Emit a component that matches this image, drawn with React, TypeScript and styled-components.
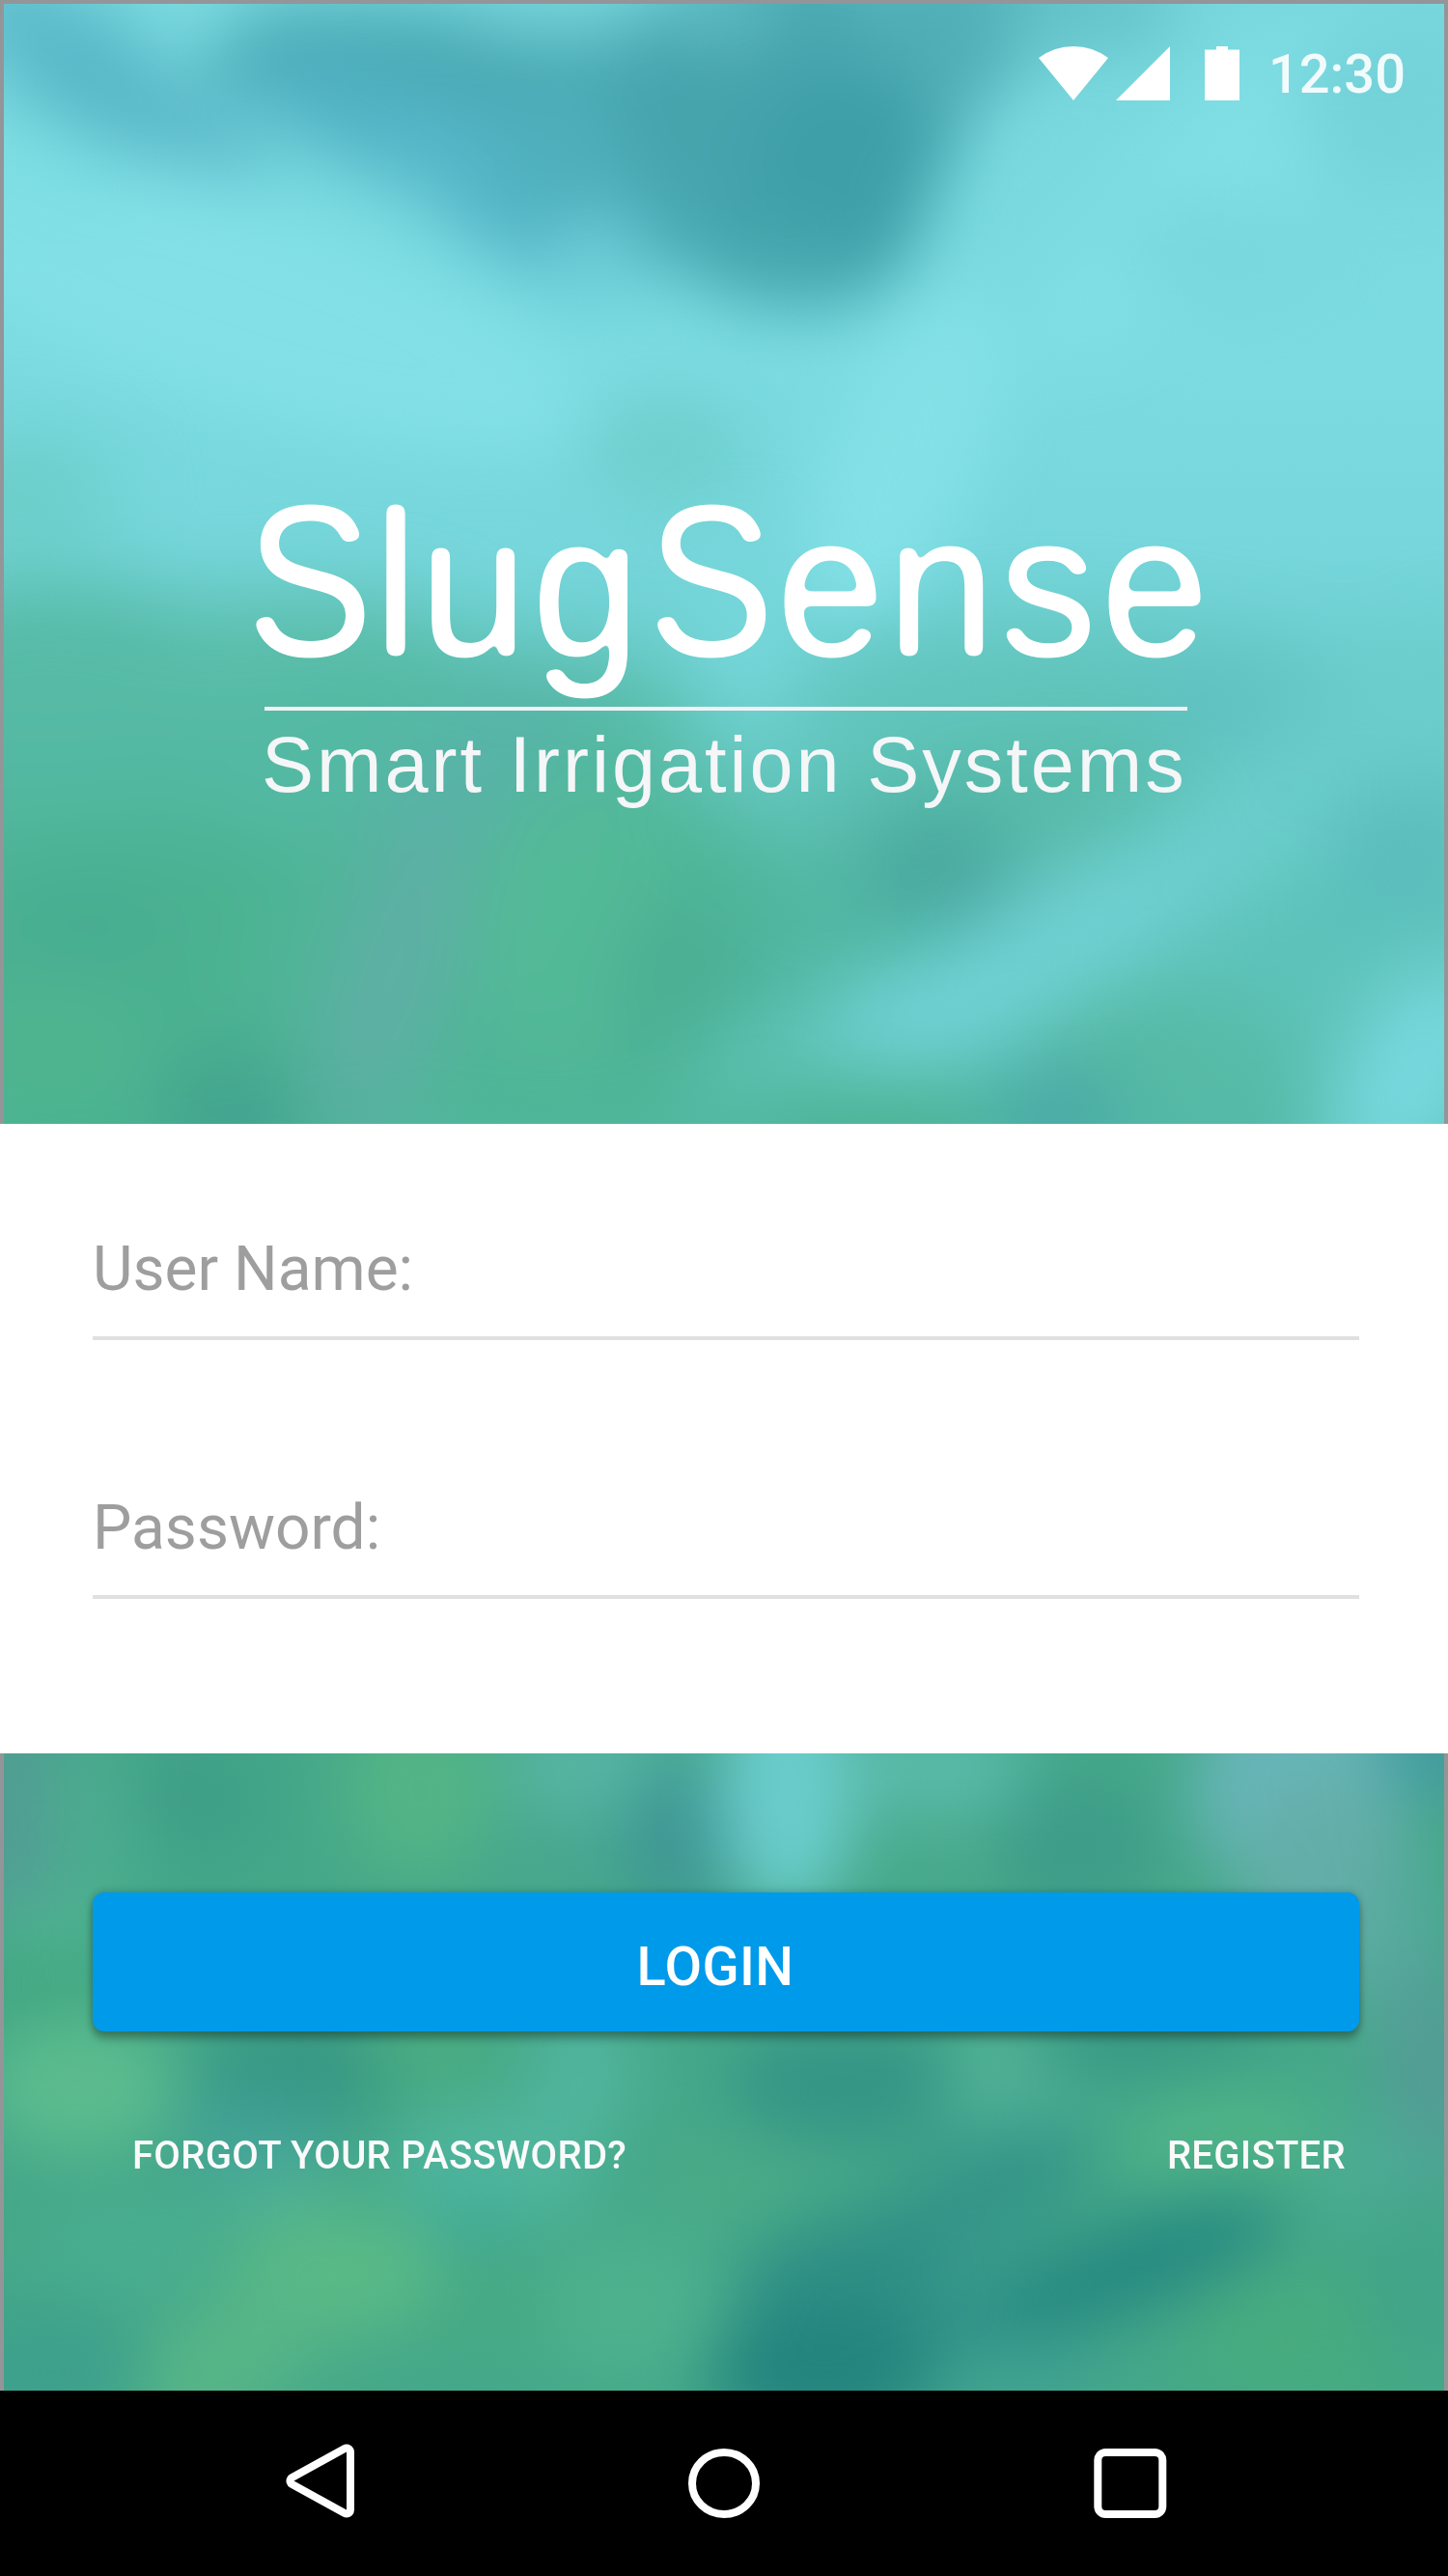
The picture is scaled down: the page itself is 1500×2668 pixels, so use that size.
import React from "react";
import styled, { createGlobalStyle } from "styled-components";

const GlobalStyle = createGlobalStyle`
  *, *::before, *::after { box-sizing: border-box; }
  body { margin: 0; background: #000; }
  h1, p { margin: 0; font-weight: 400; }
`;

/* Blurred garden photograph: soft blobs of colour on an 882 x 1568 canvas. */
type Blob = [cx: number, cy: number, rx: number, ry: number, color: string, rotate?: number];

const skyBlobs: Blob[] = [
  [130, 180, 240, 60, "#82e0e6", 18],
  [50, 40, 90, 34, "#58b7c6", 35],
  [110, 75, 60, 20, "#5cbac9", 25],
  [20, 110, 60, 26, "#7edee4", 20],
  [310, 56, 200, 44, "#4aa9b3", 8],
  [250, 82, 110, 30, "#51b2c4", 20],
  [300, 120, 90, 28, "#55b6c8", 35],
  [370, 110, 70, 50, "#4fb0bc", 30],
  [480, 60, 110, 90, "#46a4ad"],
  [570, 20, 80, 50, "#50aeb6", -30],
  [510, 110, 58, 78, "#3f9fa8", 14],
  [470, 160, 60, 26, "#47a7af", 10],
  [360, 150, 26, 18, "#74d2dc"],
  [660, 6, 60, 24, "#62c0c6"],
  [116, 8, 32, 22, "#7ddce2"],
  [335, 4, 56, 18, "#76d4da"],
  [440, 8, 40, 18, "#5fbcc3"],
  [10, 16, 34, 18, "#5ebccc"],
  [740, 110, 150, 44, "#80dfe5", -45],
  [550, 280, 46, 110, "#83e1e6", 25],
  [405, 275, 50, 34, "#6fcfcd"],
  [740, 150, 60, 30, "#78d7dd"],
  [850, 60, 60, 50, "#74d2d9"],
];

const leafBlobs: Blob[] = [
  [10, 300, 60, 32, "#6acdc6"],
  [130, 490, 230, 120, "#51b79e"],
  [30, 410, 120, 56, "#56baa6"],
  [190, 400, 90, 36, "#5abda9"],
  [280, 460, 160, 64, "#54b9a3"],
  [90, 620, 210, 110, "#4ab190"],
  [330, 590, 180, 120, "#4fb597"],
  [480, 600, 110, 60, "#50b6a0"],
  [350, 560, 60, 80, "#53ba97"],
  [290, 470, 75, 34, "#57b3a8", -40],
  [240, 590, 34, 110, "#5fafa6", 18],
  [140, 680, 36, 34, "#3f9f8e"],
  [50, 565, 56, 28, "#48ad91"],
  [30, 640, 60, 40, "#4fb590"],
  [415, 600, 40, 56, "#4aae92"],
  [650, 440, 170, 56, "#60c4bb"],
  [750, 425, 60, 30, "#60c1c1"],
  [600, 495, 120, 34, "#56b9a6", -12],
  [572, 530, 46, 32, "#46a59d"],
  [455, 395, 28, 66, "#77d8dc"],
  [440, 460, 40, 20, "#63c5bb"],
  [810, 470, 140, 38, "#6bcecc", -34],
  [620, 590, 150, 34, "#72d2d6", -30],
  [560, 612, 70, 28, "#72d3d8", -15],
  [465, 640, 50, 20, "#62c6bb", -20],
  [780, 585, 110, 46, "#5dc2b9", -34],
  [850, 520, 44, 44, "#5abdbd"],
  [700, 640, 80, 30, "#55b9a2"],
  [530, 682, 70, 28, "#4ab08f"],
  [645, 680, 36, 28, "#45a4a6"],
  [862, 655, 44, 80, "#78d9df", 30],
];

const groveBlobs: Blob[] = [
  [8, 1110, 34, 70, "#529c95"],
  [60, 1110, 34, 50, "#4cad8f"],
  [120, 1095, 44, 40, "#3e9f87"],
  [255, 1090, 46, 56, "#53b486"],
  [360, 1075, 56, 34, "#56b5a3"],
  [340, 1135, 50, 24, "#47a78f"],
  [412, 1120, 34, 48, "#3f9794"],
  [480, 1090, 42, 76, "#6bcdcc"],
  [570, 1076, 60, 30, "#5abbaa"],
  [580, 1130, 60, 24, "#49aa8c"],
  [655, 1125, 48, 42, "#3d9c89"],
  [790, 1090, 64, 66, "#68b6b9"],
  [810, 1140, 54, 60, "#64aea9"],
  [876, 1068, 36, 24, "#4299a3"],
  [850, 1190, 26, 60, "#58a99f"],
  [30, 1180, 36, 26, "#50b492"],
  [26, 1215, 40, 30, "#41a681"],
  [48, 1270, 58, 42, "#5cbc8f"],
  [185, 1260, 66, 32, "#379783"],
  [155, 1300, 44, 26, "#40a098"],
  [265, 1250, 44, 26, "#49ac81"],
  [355, 1260, 32, 44, "#51b59f"],
  [300, 1320, 64, 38, "#50b69d"],
  [165, 1330, 44, 20, "#4dae97"],
  [285, 1352, 34, 20, "#42ab99"],
  [515, 1270, 72, 34, "#349486"],
  [620, 1270, 44, 46, "#51b296"],
  [700, 1245, 76, 24, "#389885"],
  [745, 1305, 60, 42, "#4fb388"],
  [870, 1270, 26, 74, "#559b96"],
  [840, 1325, 34, 34, "#4cac96"],
  [618, 1330, 52, 24, "#2f9186", -40],
  [450, 1330, 60, 30, "#49aa87"],
  [80, 1370, 60, 30, "#49ae90"],
  [205, 1385, 66, 40, "#59b986"],
  [135, 1440, 66, 34, "#58b687", -30],
  [30, 1445, 60, 40, "#3da08c"],
  [380, 1405, 64, 44, "#4db18e"],
  [300, 1400, 36, 36, "#46a985"],
  [570, 1360, 90, 34, "#349588", -45],
  [530, 1400, 80, 52, "#2e8f85"],
  [500, 1445, 70, 40, "#23847e"],
  [690, 1380, 100, 28, "#268981", -22],
  [600, 1380, 40, 20, "#3a9c8c", -40],
  [620, 1450, 54, 24, "#40a292"],
  [800, 1425, 80, 42, "#47ab7f"],
  [860, 1390, 34, 56, "#42a488"],
];

function Blobs({ items }: { items: Blob[] }) {
  return (
    <>
      {items.map(([cx, cy, rx, ry, color, rotate = 0], i) => (
        <ellipse
          key={i}
          cx={cx}
          cy={cy}
          rx={rx}
          ry={ry}
          fill={color}
          transform={`rotate(${rotate} ${cx} ${cy})`}
        />
      ))}
    </>
  );
}

const Photo = styled.svg`
  position: absolute;
  inset: 0;
  width: 100%;
  height: 100%;
`;

function Backdrop({ viewBox, children }: { viewBox: string; children: React.ReactNode }) {
  return (
    <Photo viewBox={viewBox} preserveAspectRatio="none" aria-hidden="true">
      {children}
    </Photo>
  );
}

const Screen = styled.main`
  width: 1500px;
  height: 2668px;
  display: flex;
  flex-direction: column;
  font-family: Roboto, "Liberation Sans", sans-serif;
  overflow: hidden;
`;

const Hero = styled.header`
  position: relative;
  height: 1164px;
  border: 4px solid #949599;
  border-bottom: 0;
  overflow: hidden;
  color: #fff;
`;

const StatusBar = styled.div`
  position: relative;
  height: 100px;
  padding: 44px 40px 0 0;
  display: flex;
  justify-content: flex-end;
  align-items: flex-start;
`;

const StatusIcon = styled.svg<{ $w: number; $gap: number }>`
  width: ${(p) => p.$w}px;
  height: 56px;
  margin-right: ${(p) => p.$gap}px;
  fill: #fff;
`;

const Clock = styled.span`
  font-size: 56px;
  line-height: 58px;
  font-weight: 500;
  color: rgba(255, 255, 255, 0.9);
`;

const Brand = styled.div`
  position: relative;
  width: 956px;
  margin: 392px 0 0 270px;
  font-family: "Liberation Sans", Arial, sans-serif;
`;

const Wordmark = styled.h1`
  margin-left: -19px;
  height: 236px;
  font-size: 210px;
  line-height: 221px;
  letter-spacing: 5px;
  white-space: nowrap;
  transform: scaleX(0.956);
  transform-origin: left top;
  filter: url(#rounded-terminals);
`;

const Letter = styled.span<{ $size: number; $spacing: number }>`
  font-size: ${(p) => p.$size}px;
  line-height: 0;
  letter-spacing: ${(p) => p.$spacing}px;
`;

const Capital = styled(Letter)`
  display: inline-block;
  transform: scaleX(0.925);
  transform-origin: left center;
`;

const Tagline = styled.p`
  border-top: 4px solid #f1f2f5;
  padding-top: 8px;
  font-size: 81px;
  line-height: 96px;
  letter-spacing: 3px;
  text-indent: -3px;
  white-space: nowrap;
  color: #f5f6f8;
`;

const Sheet = styled.section`
  height: 652px;
  padding: 110px 92px 0 96px;
  display: flex;
  flex-direction: column;
  gap: 154px;
  background: #fff;
`;

const Field = styled.label`
  display: block;
  height: 114px;
  border-bottom: 4px solid #e0e0e0;
  font-size: 64px;
  line-height: 82px;
  color: #9e9e9e;
`;

const Actions = styled.section`
  position: relative;
  height: 660px;
  border: solid #949599;
  border-width: 0 4px;
  padding: 144px 88px 0 92px;
  overflow: hidden;
`;

const LoginButton = styled.button`
  position: relative;
  display: flex;
  align-items: center;
  justify-content: center;
  width: 1312px;
  height: 144px;
  padding: 10px 22px 0 0;
  border: 0;
  border-radius: 12px;
  background: #009aea;
  box-shadow: 0 0 8px rgba(0, 0, 0, 0.24), 0 8px 8px rgba(0, 0, 0, 0.26);
  font: 500 56px/56px Roboto, sans-serif;
  letter-spacing: 0.4px;
  color: #fff;
`;

const Links = styled.div`
  position: relative;
  display: flex;
  justify-content: space-between;
  margin-top: 105px;
  padding: 0 14px 0 41px;
`;

const TextLink = styled.a`
  font-size: 40px;
  line-height: 48px;
  font-weight: 500;
  letter-spacing: 0.3px;
  color: #fafafa;
`;

const NavBar = styled.nav`
  height: 192px;
  padding: 54px 291px 0 295px;
  display: flex;
  justify-content: space-between;
  align-items: flex-start;
  background: #000;
`;

const NavIcon = styled.svg<{ $w: number; $stroke?: number }>`
  width: ${(p) => p.$w}px;
  height: 80px;
  fill: #000;
  stroke: #fff;
  stroke-width: ${(p) => p.$stroke ?? 8};
  stroke-linejoin: round;
  paint-order: ${(p) => (p.$stroke ? "stroke" : "normal")};
`;

export default function App() {
  return (
    <Screen>
      <GlobalStyle />
      <Hero>
        <Backdrop viewBox="2 2 878 682">
          <defs>
            <linearGradient id="sky" x1="0" y1="0" x2="0" y2="1">
              <stop offset="0" stopColor="#78d8de" />
              <stop offset="0.32" stopColor="#7bdbe1" />
              <stop offset="0.48" stopColor="#76d6db" />
              <stop offset="0.7" stopColor="#64c6c0" />
              <stop offset="1" stopColor="#54b9a6" />
            </linearGradient>
            <filter id="haze" x="-20%" y="-20%" width="140%" height="140%" colorInterpolationFilters="sRGB">
              <feGaussianBlur stdDeviation="20" />
            </filter>
            <filter id="deep-haze" x="-20%" y="-20%" width="140%" height="140%" colorInterpolationFilters="sRGB">
              <feGaussianBlur stdDeviation="25" />
            </filter>
            <filter id="rounded-terminals" colorInterpolationFilters="sRGB">
              <feGaussianBlur stdDeviation="4.5" />
              <feComponentTransfer>
                <feFuncR type="linear" slope="0" intercept="1" />
                <feFuncG type="linear" slope="0" intercept="1" />
                <feFuncB type="linear" slope="0" intercept="1" />
                <feFuncA type="linear" slope="12" intercept="-4.9" />
              </feComponentTransfer>
            </filter>
          </defs>
          <rect width="882" height="700" fill="url(#sky)" />
          <g filter="url(#haze)">
            <Blobs items={skyBlobs} />
          </g>
          <g filter="url(#deep-haze)">
            <Blobs items={leafBlobs} />
          </g>
        </Backdrop>
        <StatusBar>
          <StatusIcon $w={72} $gap={8} viewBox="0 0 72 56">
            <path d="M36 56 0 12Q16 0 36 0T72 12Z" />
          </StatusIcon>
          <StatusIcon $w={56} $gap={36} viewBox="0 0 56 56">
            <path d="M0 56H56V0Z" />
          </StatusIcon>
          <StatusIcon $w={36} $gap={30} viewBox="0 0 36 56">
            <path d="M12 0H24V3.5H36V56H0V3.5H12Z" />
          </StatusIcon>
          <Clock>12:30</Clock>
        </StatusBar>
        <Brand>
          <Wordmark>
            <Capital $size={222} $spacing={-10}>S</Capital>
            <Letter $size={216} $spacing={2}>l</Letter>
            u
            <Letter $size={210} $spacing={8}>g</Letter>
            <Capital $size={222} $spacing={-8}>S</Capital>
            <Letter $size={210} $spacing={3}>e</Letter>
            nse
          </Wordmark>
          <Tagline>Smart Irrigation Systems</Tagline>
        </Brand>
      </Hero>

      <Sheet>
        <Field>User Name:</Field>
        <Field>Password:</Field>
      </Sheet>

      <Actions>
        <Backdrop viewBox="2 1068 878 388">
          <rect y="1060" width="882" height="400" fill="#45a889" />
          <g filter="url(#haze)">
            <Blobs items={groveBlobs} />
          </g>
        </Backdrop>
        <LoginButton type="button">LOGIN</LoginButton>
        <Links>
          <TextLink>FORGOT YOUR PASSWORD?</TextLink>
          <TextLink>REGISTER</TextLink>
        </Links>
      </Actions>

      <NavBar>
        <NavIcon $w={73} $stroke={16} viewBox="0 0 73 80">
          <path d="M9.5 39.5 64 9.5V69.5Z" />
        </NavIcon>
        <NavIcon $w={75} viewBox="0 0 75 80">
          <ellipse cx="37" cy="42" rx="33" ry="32" />
        </NavIcon>
        <NavIcon $w={76} viewBox="0 0 76 80">
          <rect x="4.3" y="10" width="67" height="64" rx="8" />
        </NavIcon>
      </NavBar>
    </Screen>
  );
}
